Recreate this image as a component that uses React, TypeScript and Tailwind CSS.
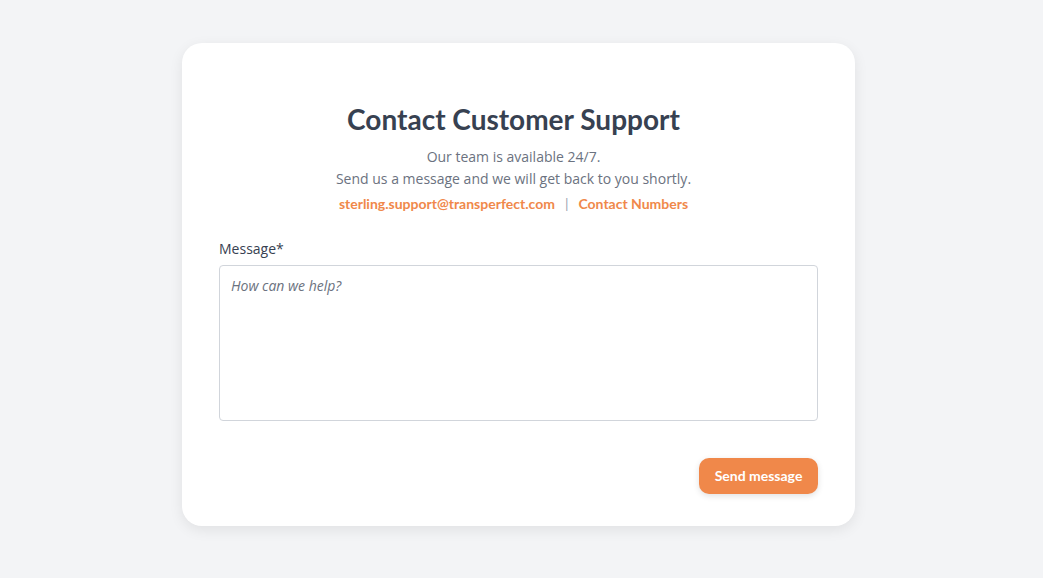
export default function App() {
  return (
    <div className="flex min-h-[578px] w-full items-start justify-center bg-[#f3f4f6] pt-[43px] pr-[6px] font-['Open_Sans',sans-serif]">
      <div className="flex w-[673px] flex-col rounded-[20px] bg-white px-[37px] pt-[58px] pb-[32px] shadow-[0_4px_14px_rgba(0,0,0,0.08)]">
        {/* 헤더 */}
        <div className="pr-[10px]">
          <h1 className="text-center font-['Lato',sans-serif] text-[28px] leading-9 font-bold text-[#374151]">
            Contact Customer Support
          </h1>
          <p className="mt-[9px] text-center text-sm leading-[22px] text-[#6b7280]">
            Our team is available 24/7.
            <br />
            Send us a message and we will get back to you shortly.
          </p>
          <p className="mt-[4px] text-center font-['Lato',sans-serif] text-[14px] leading-5 font-bold text-[#f0884a]">
            <a href="#">sterling.support@transperfect.com</a>
            <span className="mx-[10px] font-normal text-[#9ca3af]">|</span>
            <a href="#">Contact Numbers</a>
          </p>
        </div>

        {/* 메시지 */}
        <label className="mt-[25px] flex flex-col gap-[6px] text-sm leading-5 text-[#374151]">
          Message*
          <textarea
            placeholder="How can we help?"
            className="h-[156px] resize-none rounded-[4px] border border-[#d1d5db] px-[11px] py-[10px] text-sm text-[#374151] placeholder:text-[#6b7280] placeholder:italic focus:outline-none"
          />
        </label>

        <div className="mt-[37px] flex justify-end">
          <button
            type="button"
            className="h-9 w-[119px] rounded-[10px] bg-[#f0884a] font-['Lato',sans-serif] text-sm font-bold text-white shadow-[0_2px_6px_rgba(0,0,0,0.12)]"
          >
            Send message
          </button>
        </div>
      </div>
    </div>
  );
}
